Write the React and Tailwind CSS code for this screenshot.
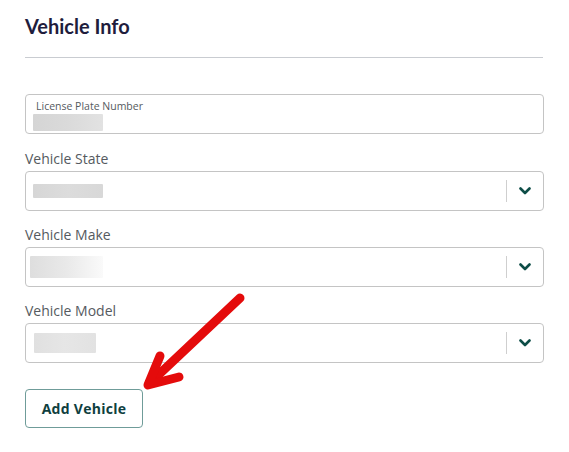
import { useState } from 'react';

function Blur({ className = '' }) {
  return <div className={`rounded-[1px] ${className}`} />;
}

function Chevron() {
  return (
    <svg width="12" height="8" viewBox="0 0 12 8" fill="none">
      <path d="M1.5 1.5 6 6l4.5-4.5" stroke="#0d4d47" strokeWidth="2.6" strokeLinecap="round" strokeLinejoin="round" />
    </svg>
  );
}

function SelectField({ label, blur, className = 'mt-[14px]' }) {
  return (
    <div className={className}>
      <div className="text-[14px] leading-5 text-[#555a60] mb-[2px]">{label}</div>
      <div className="flex h-10 items-center rounded-[4px] border border-[#c4c4c4] bg-white">
        <div className="flex-1 h-full flex items-center">{blur}</div>
        <div className="h-[22px] w-px bg-[#cfcfcf]" />
        <div className="flex w-[36px] items-center justify-center">
          <Chevron />
        </div>
      </div>
    </div>
  );
}

export default function App() {
  const [plate] = useState('');

  return (
    <div className="relative w-[569px] h-[452px] bg-white px-[25px] pt-[12px] font-['Open_Sans',sans-serif]">
      <h2 className="font-['Lato',sans-serif] text-[20px] font-bold leading-7 text-[#1f1d3d]">
        Vehicle Info
      </h2>
      <div className="mt-[17px] h-px w-[518px] bg-[#c9ccd1]" />

      <div className="mt-[36px] h-10 w-[519px] rounded-[4px] border border-[#c4c4c4] pl-[10px] pt-[5px]">
        <div className="text-[10.5px] leading-[12px] text-[#555a60]">License Plate Number</div>
        <div className="mt-[2px] -ml-[3px] flex items-center">
          <Blur className="h-[17px] w-[70px] bg-gradient-to-r from-[#d5d5d5] via-[#dadada] to-[#e2e2e2]" />
          <span className="sr-only">{plate}</span>
        </div>
      </div>

      <SelectField
        className="mt-[15px]"
        label="Vehicle State"
        blur={<Blur className="ml-[7px] h-[14px] w-[70px] bg-gradient-to-r from-[#d6d6d6] via-[#dcdcdc] to-[#d8d8d8]" />}
      />
      <SelectField
        label="Vehicle Make"
        blur={<Blur className="ml-[4px] h-[22px] w-[73px] bg-gradient-to-r from-[#dedede] via-[#e9e9e9] to-[#fafafa]" />}
      />
      <SelectField
        label="Vehicle Model"
        blur={<Blur className="ml-[8px] h-[20px] w-[62px] bg-gradient-to-r from-[#e0e0e0] via-[#e6e6e6] to-[#e2e2e2]" />}
      />

      <button className="mt-[26px] h-[39px] w-[118px] rounded-[4px] border border-[#6f9c99] bg-white text-[14px] font-bold tracking-[0.02em] text-[#0f3f3f]">
        Add Vehicle
      </button>

      <svg className="pointer-events-none absolute left-0 top-0" width="569" height="452" viewBox="0 0 569 452">
        <line x1="240" y1="298" x2="153" y2="380" stroke="#e40b0b" strokeWidth="9" strokeLinecap="round" />
        <polyline points="160,356 148,385 179,377" fill="none" stroke="#e40b0b" strokeWidth="9" strokeLinecap="round" strokeLinejoin="round" />
      </svg>
    </div>
  );
}
